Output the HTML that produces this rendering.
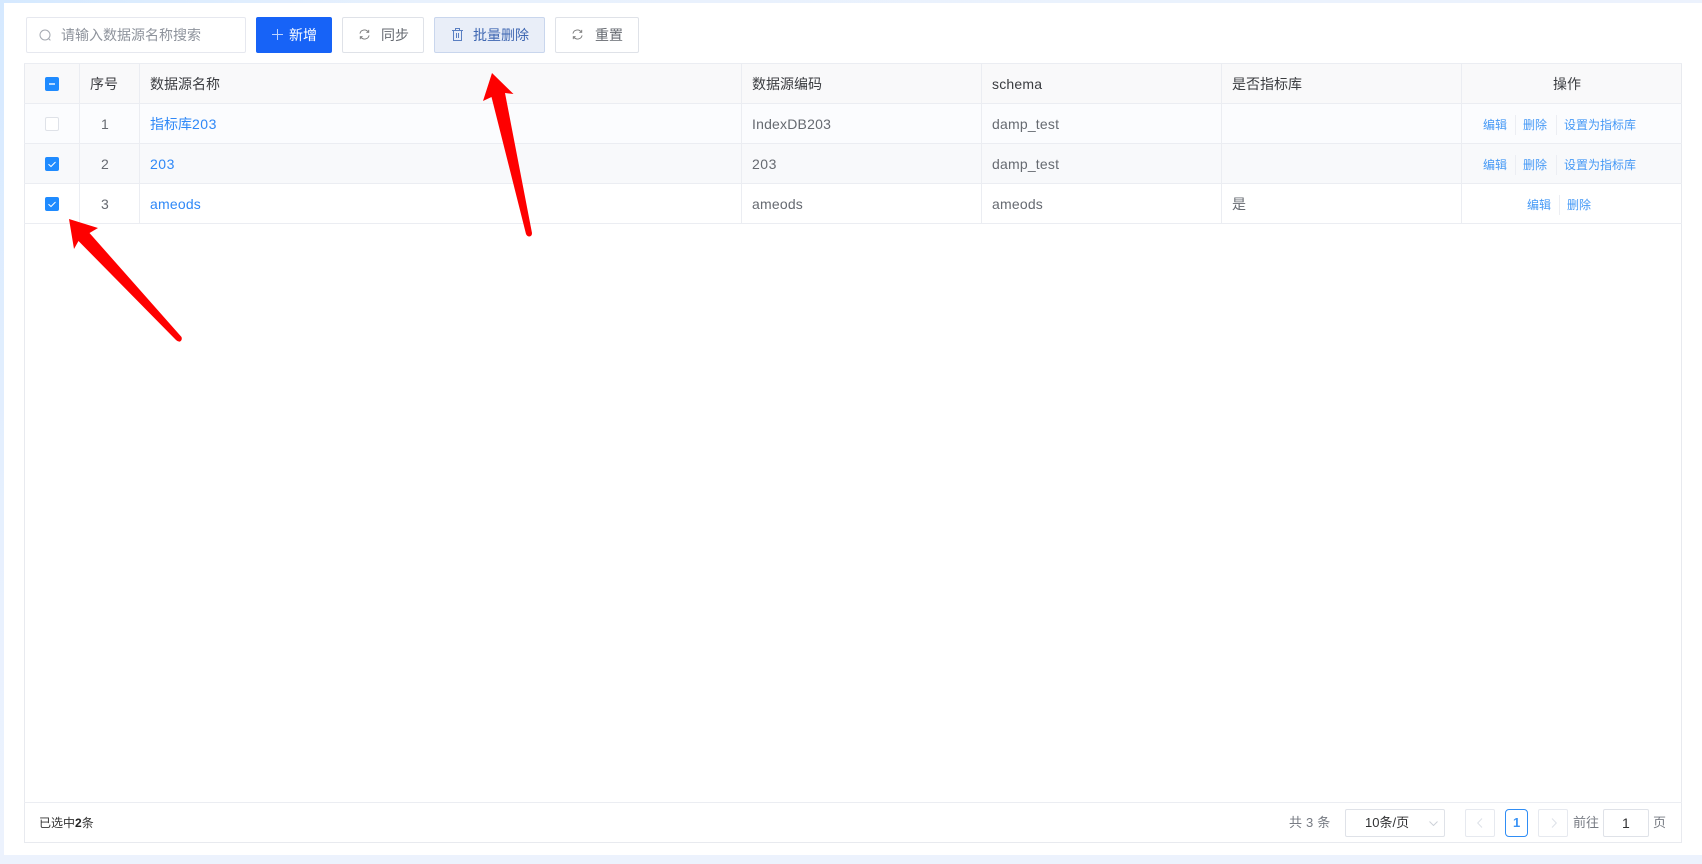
<!DOCTYPE html>
<html lang="zh-CN"><head><meta charset="utf-8"><title>数据源</title>
<style>
*{box-sizing:border-box}
html,body{margin:0;padding:0;width:1702px;height:864px;overflow:hidden}
body{position:relative;background:#ecf2fd;font-family:"Liberation Sans","Noto Sans CJK SC",sans-serif;font-size:14px;color:#666a71}
.a{position:absolute}
.t{position:absolute;white-space:nowrap;line-height:20px;height:20px}
.btn{position:absolute;top:17px;height:36px;border:1px solid #dfe2e8;border-radius:2px;background:#fff}
.c{position:absolute;width:14px;height:14px;left:45px;border-radius:2px;background:#1f8bff}
.hl{position:absolute;left:24px;width:1658px;height:1px;background:#ebedf2}
.vl{position:absolute;width:1px;background:#ebedf2}
.lk{color:#2f88f7}
.op{position:absolute;white-space:nowrap;font-size:12px;line-height:16px;color:#4599f6}
.dv{position:absolute;width:1px;height:20px;background:#eceef3}
.pg{position:absolute;top:809px;height:28px;border:1px solid #e6e9ef;border-radius:2px;background:#fff}
</style></head><body>
<div class="a" style="left:0;top:0;width:4px;height:864px;background:linear-gradient(#d5e9ff,#e9f1fe 70%,#ecf2fd)"></div>
<div class="a" style="left:0;top:0;width:1702px;height:3px;background:linear-gradient(90deg,#d5e9ff,#e8f1fd 25%,#ecf2fd)"></div>
<div class="a" style="left:4px;top:3px;width:1698px;height:852px;background:#fff"></div>

<!-- toolbar -->
<div class="a" style="left:26px;top:17px;width:220px;height:36px;border:1px solid #e6e8ef;border-radius:2px;background:#fff"></div>
<svg class="a" style="left:39px;top:29px" width="13" height="13" viewBox="0 0 13 13" fill="none" stroke="#a3a8b0" stroke-width="1"><circle cx="6" cy="6" r="5"/><path d="M9.600 9.600l1.800 1.800"/></svg>
<span class="t" style="left:61px;top:25px;color:#8e939c">请输入数据源名称搜索</span>

<div class="btn" style="left:256px;width:76px;background:#1763f7;border-color:#1763f7"></div>
<svg class="a" style="left:272px;top:29px" width="11" height="11" viewBox="0 0 11 11" stroke="#bcd3ff" stroke-width="1"><path d="M5.500 0v11M0 5.500h11"/></svg>
<span class="t" style="left:289px;top:25px;color:#fff">新增</span>

<div class="btn" style="left:342px;width:82px"></div>
<svg class="a" style="left:359px;top:29px" width="11" height="11" viewBox="0 0 12 12" fill="none" stroke="#777" stroke-width="1"><path d="M1 5A5 5 0 0 1 10 3.2M11 7A5 5 0 0 1 2 8.8"/><path d="M10.600 1v2.600H8M1.400 11V8.400H4"/></svg>
<span class="t" style="left:381px;top:25px;color:#666a71">同步</span>

<div class="btn" style="left:434px;width:111px;background:#e9eef8;border-color:#c9d6ed"></div>
<svg class="a" style="left:452px;top:28px" width="11" height="13" viewBox="0 0 11 13" fill="none" stroke="#5a7fc2" stroke-width="1"><path d="M0 2.500h11M3.500 2.500V.5h4v2M1.500 2.500v10h8v-10M4.500 5v5M6.500 5v5"/></svg>
<span class="t" style="left:473px;top:25px;color:#3f67b2">批量删除</span>

<div class="btn" style="left:555px;width:84px"></div>
<svg class="a" style="left:572px;top:29px" width="11" height="11" viewBox="0 0 12 12" fill="none" stroke="#777" stroke-width="1"><path d="M1 5A5 5 0 0 1 10 3.2M11 7A5 5 0 0 1 2 8.8"/><path d="M10.600 1v2.600H8M1.400 11V8.400H4"/></svg>
<span class="t" style="left:595px;top:25px;color:#666a71">重置</span>

<!-- table -->
<div class="a" style="left:24px;top:63px;width:1658px;height:780px;border:1px solid #e8eaef;background:#fff"></div>
<div class="a" style="left:25px;top:64px;width:1656px;height:39px;background:#f9f9fa"></div>
<div class="a" style="left:25px;top:104px;width:1656px;height:39px;background:#fbfcfe"></div>
<div class="a" style="left:25px;top:144px;width:1656px;height:39px;background:#f8f9fb"></div>
<div class="hl" style="top:63px"></div><div class="hl" style="top:103px"></div><div class="hl" style="top:143px"></div><div class="hl" style="top:183px"></div><div class="hl" style="top:223px"></div><div class="hl" style="top:802px"></div>
<div class="vl" style="left:79px;top:63px;height:160px"></div>
<div class="vl" style="left:139px;top:63px;height:160px"></div>
<div class="vl" style="left:741px;top:63px;height:160px"></div>
<div class="vl" style="left:981px;top:63px;height:160px"></div>
<div class="vl" style="left:1221px;top:63px;height:160px"></div>
<div class="vl" style="left:1461px;top:63px;height:160px"></div>

<!-- checkboxes -->
<div class="c" style="top:77px"><div class="a" style="left:4px;top:6px;width:6px;height:2px;background:#b6d9ff"></div></div>
<div class="c" style="top:117px;background:#fff;border:1px solid #dfe2e8"></div>
<div class="c" style="top:157px"><svg class="a" style="left:0;top:0" width="14" height="14" viewBox="0 0 14 14" fill="none" stroke="#fff" stroke-width="1"><path d="M3.500 7.200l2.500 2.300L10.500 5"/></svg></div>
<div class="c" style="top:197px"><svg class="a" style="left:0;top:0" width="14" height="14" viewBox="0 0 14 14" fill="none" stroke="#fff" stroke-width="1"><path d="M3.500 7.200l2.500 2.300L10.500 5"/></svg></div>

<!-- header -->
<span class="t" style="left:90px;top:74px;color:#3a3c40">序号</span>
<span class="t" style="left:150px;top:74px;color:#3a3c40">数据源名称</span>
<span class="t" style="left:752px;top:74px;color:#3a3c40">数据源编码</span>
<span class="t" style="left:992px;top:74px;color:#3a3c40;letter-spacing:.2px">schema</span>
<span class="t" style="left:1232px;top:74px;color:#3a3c40">是否指标库</span>
<span class="t" style="left:1553px;top:74px;color:#3a3c40">操作</span>

<!-- rows -->
<span class="t" style="left:101px;top:114px">1</span>
<span class="t lk" style="left:150px;top:114px">指标库<span style="letter-spacing:.5px">203</span></span>
<span class="t" style="left:752px;top:114px;letter-spacing:.2px">IndexDB203</span>
<span class="t" style="left:992px;top:114px;letter-spacing:.2px">damp_test</span>

<span class="t" style="left:101px;top:154px">2</span>
<span class="t lk" style="left:150px;top:154px;letter-spacing:.5px">203</span>
<span class="t" style="left:752px;top:154px;letter-spacing:.5px">203</span>
<span class="t" style="left:992px;top:154px;letter-spacing:.2px">damp_test</span>

<span class="t" style="left:101px;top:194px">3</span>
<span class="t lk" style="left:150px;top:194px;letter-spacing:.2px">ameods</span>
<span class="t" style="left:752px;top:194px;letter-spacing:.2px">ameods</span>
<span class="t" style="left:992px;top:194px;letter-spacing:.2px">ameods</span>
<span class="t" style="left:1232px;top:194px">是</span>

<!-- ops -->
<span class="op" style="left:1483px;top:117px">编辑</span><div class="dv" style="left:1515px;top:115px"></div>
<span class="op" style="left:1523px;top:117px">删除</span><div class="dv" style="left:1556px;top:115px"></div>
<span class="op" style="left:1564px;top:117px">设置为指标库</span>
<span class="op" style="left:1483px;top:157px">编辑</span><div class="dv" style="left:1515px;top:155px"></div>
<span class="op" style="left:1523px;top:157px">删除</span><div class="dv" style="left:1556px;top:155px"></div>
<span class="op" style="left:1564px;top:157px">设置为指标库</span>
<span class="op" style="left:1527px;top:197px">编辑</span><div class="dv" style="left:1559px;top:195px"></div>
<span class="op" style="left:1567px;top:197px">删除</span>

<!-- footer -->
<span class="t" style="left:39px;top:813px;font-size:12px;color:#333">已选中<b style="color:#222">2</b>条</span>
<span class="t" style="left:1289px;top:813px;font-size:13px;color:#777b83;letter-spacing:.2px">共 3 条</span>
<div class="pg" style="left:1345px;width:100px;border-color:#dfe2e8"></div>
<span class="t" style="left:1365px;top:813px;font-size:13px;color:#303133">10条/页</span>
<svg class="a" style="left:1429px;top:821px" width="9" height="5" viewBox="0 0 9 5" fill="none" stroke="#cdd1d8"><path d="M.5.500l4 4 4-4"/></svg>
<div class="pg" style="left:1465px;width:30px"></div>
<svg class="a" style="left:1477px;top:818px" width="6" height="10" viewBox="0 0 6 10" fill="none" stroke="#dde1e8"><path d="M5 .5L.7 5 5 9.500"/></svg>
<div class="pg" style="left:1505px;width:23px;border-color:#2f8df5;border-radius:4px"></div>
<span class="t" style="left:1513px;top:813px;font-size:13px;font-weight:bold;color:#3b93f5">1</span>
<div class="pg" style="left:1538px;width:30px"></div>
<svg class="a" style="left:1551px;top:818px" width="6" height="10" viewBox="0 0 6 10" fill="none" stroke="#dde1e8"><path d="M1 .5L5.300 5 1 9.500"/></svg>
<span class="t" style="left:1573px;top:813px;font-size:13px;color:#777b83">前往</span>
<div class="pg" style="left:1603px;width:46px;border-color:#dfe2e8"></div>
<span class="t" style="left:1622px;top:813px;font-size:14px;color:#303133">1</span>
<span class="t" style="left:1653px;top:813px;font-size:13px;color:#777b83">页</span>

<!-- arrows -->
<svg class="a" style="left:0;top:0" width="1702" height="864" viewBox="0 0 1702 864">
<path d="M69 219L98 228L89.500 233L181.500 337Q182.500 340 180 341.500Q178 342 176 340L78.500 241L74 249Z" fill="#fe0000"/>
<path d="M492 73L513.500 94L505 93L532 233Q532 236 529.500 236.500Q527 236.500 526 234L491.500 97L483 101Z" fill="#fe0000"/>
</svg>
</body></html>
